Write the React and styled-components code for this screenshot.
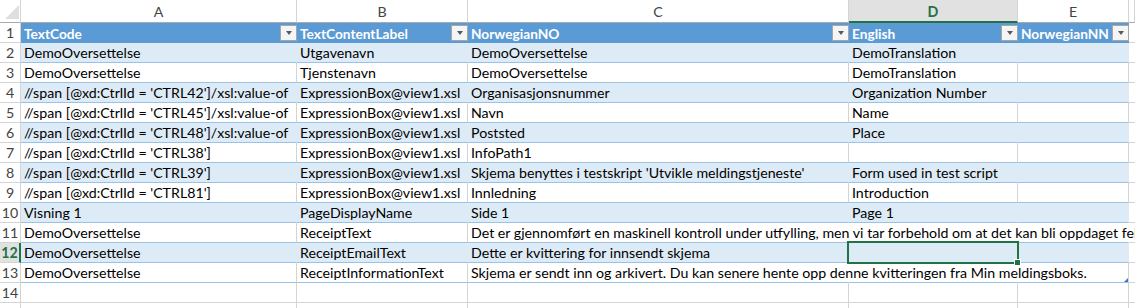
import React from 'react';
import styled, { createGlobalStyle, css } from 'styled-components';

const FONT = `'Lato', 'Liberation Sans', sans-serif`;
const COLS = '21px 276px 171px 381px 169px 111px 1fr';
const GREEN = '#217346';
const GRID = '#d4d4d4';
const HEAD_BLUE = '#5b9bd5';
const BAND = '#ddebf7';
const LINE_BLUE = '#9bc2e6';
const SIZE = '14.2px';

const GlobalStyle = createGlobalStyle`
  html, body { margin: 0; padding: 0; background: #fff; }
  body { font-family: ${FONT}; overflow: hidden; }
`;

const Sheet = styled.div`
  width: 1135px;
  height: 308px;
  overflow: hidden;
  background: #fff;
  display: flex;
  flex-direction: column;
`;

const Row = styled.div`
  flex: none;
  display: grid;
  grid-template-columns: ${COLS};
  height: ${(p) => p.$h}px;
`;

const Corner = styled.div`
  box-sizing: border-box;
  border-right: 1px solid ${GRID};
  border-bottom: 1px solid #ababab;
  display: flex;
  align-items: flex-end;
  justify-content: flex-end;
  padding: 0 1px 3px 0;
`;

const CornerMark = styled.span`
  width: 0;
  height: 0;
  border-left: 14px solid transparent;
  border-bottom: 14px solid #dfdfdf;
`;

const ColHead = styled.div`
  box-sizing: border-box;
  border-right: 1px solid ${GRID};
  border-bottom: 1px solid #ababab;
  display: flex;
  align-items: center;
  justify-content: center;
  color: #444;
  font-size: ${SIZE};
  padding-top: 1px;
  ${(p) =>
    p.$active &&
    css`
      background: #e1e1e1;
      color: ${GREEN};
      font-weight: 700;
      border-bottom: 2px solid ${GREEN};
      padding-top: 2px;
    `}
`;

const RowHead = styled.div`
  box-sizing: border-box;
  border-right: 1px solid ${GRID};
  border-bottom: 1px solid ${GRID};
  color: #444;
  font-size: ${SIZE};
  line-height: 19px;
  text-align: center;
  ${(p) =>
    p.$active &&
    css`
      background: #e1e1e1;
      color: ${GREEN};
      font-weight: 700;
      border-right: 2px solid ${GREEN};
    `}
`;

const tones = {
  band: { bg: BAND, right: BAND, bottom: LINE_BLUE },
  plain: { bg: '#fff', right: GRID, bottom: LINE_BLUE },
  out: { bg: '#fff', right: GRID, bottom: GRID },
};

const Cell = styled.div`
  box-sizing: border-box;
  min-width: 0;
  position: relative;
  white-space: nowrap;
  overflow: hidden;
  padding: 0 3px;
  font-size: ${SIZE};
  line-height: 19px;
  color: #000;
  background: ${(p) => tones[p.$tone].bg};
  border-bottom: 1px solid ${(p) => tones[p.$tone].bottom};
  border-right: 1px solid
    ${(p) => (p.$open ? tones[p.$tone].bg : tones[p.$tone].right)};
  ${(p) =>
    p.$spill &&
    css`
      overflow: visible;
      z-index: 1;
    `}
  ${(p) =>
    p.$selected &&
    css`
      overflow: visible;
      z-index: 2;
      &::after {
        content: '';
        position: absolute;
        left: -2px;
        top: -2px;
        right: -2px;
        bottom: -2px;
        border: 2px solid ${GREEN};
      }
      &::before {
        content: '';
        position: absolute;
        right: -4px;
        bottom: -4px;
        width: 5px;
        height: 5px;
        background: ${GREEN};
        border: 1px solid #fff;
        z-index: 3;
      }
    `}
  ${(p) =>
    p.$handle &&
    css`
      &::after {
        content: '';
        position: absolute;
        right: 0;
        bottom: 0;
        width: 0;
        height: 0;
        border-left: 4px solid transparent;
        border-bottom: 4px solid #4472c4;
      }
    `}
`;

const HeadCell = styled.div`
  box-sizing: border-box;
  min-width: 0;
  display: flex;
  align-items: center;
  gap: 1px;
  padding: 0 0 0 3px;
  background: ${HEAD_BLUE};
  border-bottom: 1px solid ${HEAD_BLUE};
  color: #fff;
  font-weight: 700;
  font-size: 13.7px;
  line-height: 19px;
  white-space: nowrap;
  overflow: hidden;
`;

const HeadLabel = styled.span`
  flex: 1;
  min-width: 0;
  overflow: hidden;
  padding-top: 1px;
`;

const DropButton = styled.span`
  flex: none;
  box-sizing: border-box;
  width: 17px;
  height: 16px;
  border: 1px solid #a6a6a6;
  background: #f5f5f5;
  display: flex;
  align-items: center;
  justify-content: center;
  &::after {
    content: '';
    width: 0;
    height: 0;
    border-left: 3.5px solid transparent;
    border-right: 3.5px solid transparent;
    border-top: 4px solid #595959;
  }
`;

const letters = ['A', 'B', 'C', 'D', 'E', ''];
const headers = ['TextCode', 'TextContentLabel', 'NorwegianNO', 'English', 'NorwegianNN'];

const data = [
  { c: ['DemoOversettelse', 'Utgavenavn', 'DemoOversettelse', 'DemoTranslation', ''] },
  { c: ['DemoOversettelse', 'Tjenstenavn', 'DemoOversettelse', 'DemoTranslation', ''] },
  { c: ["//span [@xd:CtrlId = 'CTRL42']/xsl:value-of", 'ExpressionBox@view1.xsl', 'Organisasjonsnummer', 'Organization Number', ''] },
  { c: ["//span [@xd:CtrlId = 'CTRL45']/xsl:value-of", 'ExpressionBox@view1.xsl', 'Navn', 'Name', ''] },
  { c: ["//span [@xd:CtrlId = 'CTRL48']/xsl:value-of", 'ExpressionBox@view1.xsl', 'Poststed', 'Place', ''] },
  { c: ["//span [@xd:CtrlId = 'CTRL38']", 'ExpressionBox@view1.xsl', 'InfoPath1', '', ''] },
  { c: ["//span [@xd:CtrlId = 'CTRL39']", 'ExpressionBox@view1.xsl', "Skjema benyttes i testskript 'Utvikle meldingstjeneste'", 'Form used in test script', ''] },
  { c: ["//span [@xd:CtrlId = 'CTRL81']", 'ExpressionBox@view1.xsl', 'Innledning', 'Introduction', ''] },
  { c: ['Visning 1', 'PageDisplayName', 'Side 1', 'Page 1', ''] },
  {
    c: ['DemoOversettelse', 'ReceiptText', 'Det er gjennomført en maskinell kontroll under utfylling, men vi tar forbehold om at det kan bli oppdaget feil og mangler ved den senere saksbehandlingen.', '', ''],
    spill: { at: 2, over: 3 },
  },
  { c: ['DemoOversettelse', 'ReceiptEmailText', 'Dette er kvittering for innsendt skjema', '', ''], selected: 3 },
  {
    c: ['DemoOversettelse', 'ReceiptInformationText', 'Skjema er sendt inn og arkivert. Du kan senere hente opp denne kvitteringen fra Min meldingsboks.', '', ''],
    spill: { at: 2, over: 2 },
    handle: true,
  },
];

function BodyRow({ num, row, band }) {
  const cells = [...row.c, ''];
  const tone = band ? 'band' : 'plain';
  const active = row.selected !== undefined;
  return (
    <Row $h={20}>
      <RowHead $active={active}>{num}</RowHead>
      {cells.map((text, i) => {
        const t = i < 5 ? tone : 'out';
        const sp = row.spill;
        const spill = sp && i === sp.at;
        const open = sp && i >= sp.at && i < sp.at + sp.over;
        return (
          <Cell
            key={i}
            $tone={t}
            $spill={spill}
            $open={open}
            $selected={row.selected === i}
            $handle={row.handle && i === 4}
          >
            {text}
          </Cell>
        );
      })}
    </Row>
  );
}

function EmptyRow({ num }) {
  return (
    <Row $h={20}>
      <RowHead>{num}</RowHead>
      {letters.map((_, i) => (
        <Cell key={i} $tone="out" />
      ))}
    </Row>
  );
}

export default function App() {
  return (
    <>
      <GlobalStyle />
      <Sheet>
        <Row $h={23}>
          <Corner>
            <CornerMark />
          </Corner>
          {letters.map((l, i) => (
            <ColHead key={i} $active={l === 'D'}>
              {l}
            </ColHead>
          ))}
        </Row>
        <Row $h={20}>
          <RowHead>1</RowHead>
          {headers.map((h) => (
            <HeadCell key={h}>
              <HeadLabel>{h}</HeadLabel>
              <DropButton />
            </HeadCell>
          ))}
          <Cell $tone="out" />
        </Row>
        {data.map((row, i) => (
          <BodyRow key={i} num={i + 2} row={row} band={i % 2 === 0} />
        ))}
        <EmptyRow num={14} />
        <EmptyRow num="" />
      </Sheet>
    </>
  );
}
